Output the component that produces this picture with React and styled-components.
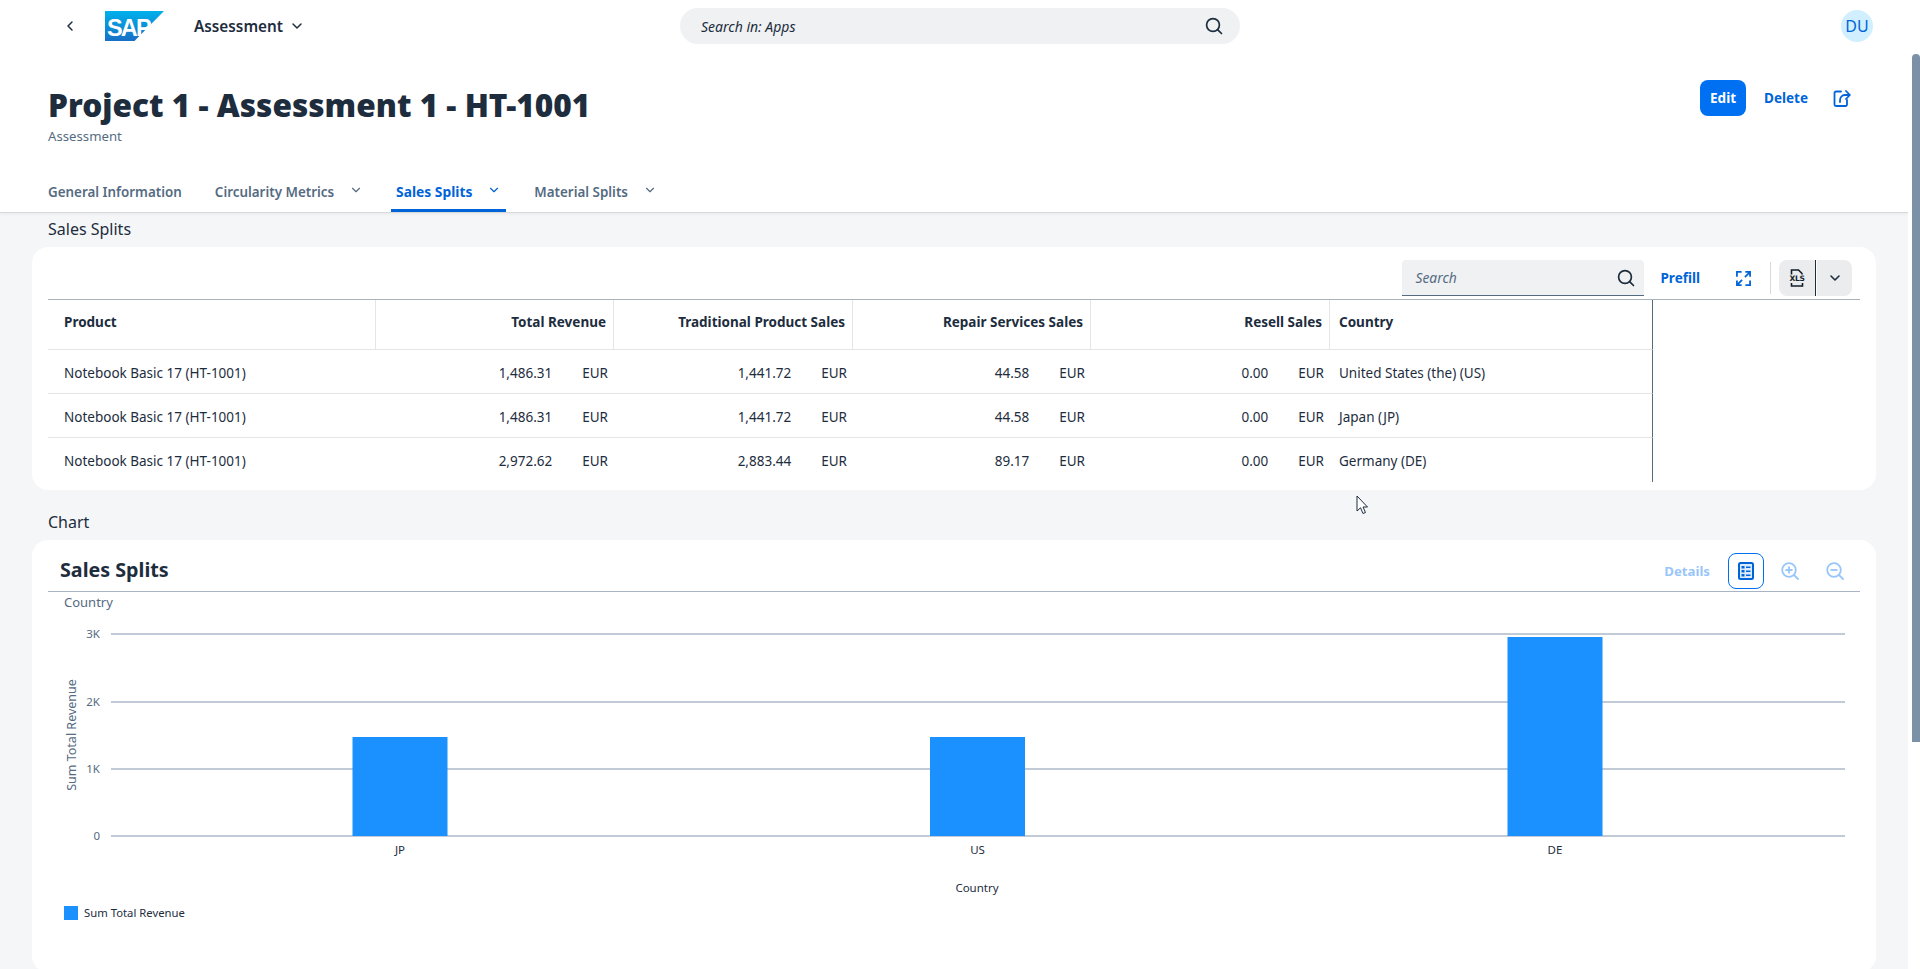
import styled, { createGlobalStyle } from 'styled-components';
import { ChevronDown, ChevronLeft } from 'lucide-react';

const GlobalStyle = createGlobalStyle`
    html, body {
        margin: 0;
        height: 100%;
        overflow: hidden;
    }
    body {
        font-family: "Noto Sans", "Liberation Sans", sans-serif;
        color: #1d2d3e;
    }
    * {
        box-sizing: border-box;
    }
`;

const Page = styled.div`
    position: relative;
    display: flex;
    flex-direction: column;
    height: 100vh;
    background: #fff;
    overflow: hidden;
`;

const Shell = styled.header`
    display: grid;
    grid-template-columns: 1fr 560px 1fr;
    align-items: center;
    flex: 0 0 54px;
    height: 54px;
    padding-bottom: 2px;
`;

const ShellLeft = styled.div`
    display: flex;
    align-items: center;
    padding-left: 62px;
`;

const BackButton = styled.span`
    display: flex;
    width: 16px;
    margin-right: 27px;
`;

const AppTitle = styled.span`
    display: flex;
    align-items: center;
    gap: 6px;
    margin-left: 30px;
    font-size: 15.3px;
    font-weight: 600;
`;

const ShellSearch = styled.div`
    display: flex;
    align-items: center;
    justify-content: space-between;
    height: 36px;
    padding: 0 17px 0 21px;
    border-radius: 18px;
    background: #eff1f2;
    font-size: 14px;
    font-style: italic;
`;

const ShellRight = styled.div`
    display: flex;
    justify-content: flex-end;
    padding-right: 47px;
`;

const Avatar = styled.span`
    display: flex;
    align-items: center;
    justify-content: center;
    width: 32px;
    height: 32px;
    border-radius: 50%;
    background: #d1efff;
    color: #0064d9;
    font-size: 16px;
`;

const Workspace = styled.div`
    display: flex;
    flex: 1;
    min-height: 0;
`;

const Main = styled.main`
    flex: 1;
    min-width: 0;
    overflow: hidden;
    background: #f5f6f7;
`;

const Rail = styled.div`
    flex: 0 0 12px;
    padding-left: 4px;
    background: #fff;
`;

const Thumb = styled.div`
    height: 688px;
    border-radius: 4px 4px 0 0;
    background: #7b91a8;
`;

const ObjectHeader = styled.section`
    display: flex;
    flex-direction: column;
    height: 159px;
    padding: 26px 0 0 48px;
    background: #fff;
    border-bottom: 1px solid #d9d9d9;
    box-shadow: 0 1px 3px rgba(0, 0, 0, 0.06);
`;

const TitleRow = styled.div`
    display: flex;
    justify-content: space-between;
    align-items: flex-start;
    padding-right: 57px;
`;

const Title = styled.h1`
    margin: 5px 0 0;
    font-size: 31.6px;
    line-height: 40px;
    font-weight: 900;
`;

const Subtitle = styled.div`
    margin-top: 2px;
    font-size: 13.2px;
    line-height: 18px;
    color: #556b82;
`;

const HeaderActions = styled.div`
    display: flex;
    align-items: center;
    gap: 18px;
`;

const EmphasizedButton = styled.span`
    display: flex;
    align-items: center;
    justify-content: center;
    width: 46px;
    height: 36px;
    border-radius: 8px;
    background: #0070f2;
    color: #fff;
    font-size: 13.5px;
    font-weight: 700;
`;

const TextButton = styled.span`
    color: ${p => (p.$disabled ? '#99c6fa' : '#0064d9')};
    font-size: ${p => (p.$disabled ? '13.2px' : '13.5px')};
    font-weight: 700;
`;

const PrefillButton = styled(TextButton)`
    margin: 0 36px 0 16px;
`;

const IconSlot = styled.span`
    display: flex;
    align-items: center;
    justify-content: center;
    margin-left: ${p => p.$offset || 0}px;
`;

const Tabs = styled.nav`
    display: flex;
    gap: 23px;
    height: 40px;
    margin-top: auto;
    margin-left: -5px;
`;

const Tab = styled.div`
    display: flex;
    align-items: center;
    gap: 15px;
    height: 40px;
    padding: 2px 5px 0;
    border-bottom: 3px solid ${p => (p.$active ? '#0064d9' : 'transparent')};
    color: ${p => (p.$active ? '#0064d9' : '#556b82')};
    font-size: ${p => (p.$active ? '13.8px' : '13.4px')};
    font-weight: ${p => (p.$active ? 700 : 600)};

    svg {
        margin-top: -4px;
    }
`;

const Content = styled.div`
    padding: 6px 32px 0;
`;

const SectionLabel = styled.div`
    margin: ${p => p.$top || 0}px 16px 8px;
    font-size: 16px;
    line-height: 20px;
`;

const Card = styled.section`
    height: ${p => p.$height}px;
    padding: 13px 16px 0;
    border-radius: 16px;
    background: #fff;
`;

const TableToolbar = styled.div`
    display: flex;
    justify-content: flex-end;
    align-items: center;
    height: 36px;
    padding-right: 8px;
`;

const ToolbarSearch = styled.div`
    display: flex;
    align-items: center;
    justify-content: space-between;
    width: 242px;
    height: 36px;
    padding: 0 9px 0 13px;
    border-bottom: 1px solid #556b82;
    border-radius: 4px 4px 0 0;
    background: #eff1f2;
    color: #556b82;
    font-size: 13.8px;
    font-style: italic;
`;

const Separator = styled.span`
    width: 1px;
    height: 32px;
    margin: 0 8px 0 19px;
    background: #d9d9d9;
`;

const MenuPart = styled.span`
    display: flex;
    align-items: center;
    justify-content: center;
    width: ${p => (p.$left ? '37px' : '35px')};
    height: 36px;
    background: #eaecee;
    border-radius: ${p => (p.$left ? '8px 0 0 8px' : '0 8px 8px 0')};
    border-right: ${p => (p.$left ? '1px solid #1d2d3e' : 'none')};
    margin-right: ${p => (p.$left ? '1px' : '0')};
`;

const TableFrame = styled.div`
    margin-top: 3px;
    border-top: 1px solid #a8b3bd;
`;

const Table = styled.table`
    width: 1605px;
    table-layout: fixed;
    border-collapse: separate;
    border-spacing: 0;
    font-size: 13.5px;
`;

const Head = styled.th`
    height: 50px;
    padding: 0 7px 5px ${p => p.$left || 9}px;
    border-bottom: 1px solid #e5e5e5;
    border-right: 1px solid ${p => (p.$end ? '#556b82' : '#e5e5e5')};
    font-weight: 700;
    text-align: ${p => (p.$numeric ? 'right' : 'left')};
`;

const Cell = styled.td`
    height: 44px;
    padding: 2px 6px 0 ${p => p.$left || 9}px;
    border-bottom: ${p => (p.$last ? 'none' : '1px solid #e5e5e5')};
    border-right: ${p => (p.$end ? '1px solid #556b82' : 'none')};
`;

const Amount = styled.div`
    display: flex;
    justify-content: flex-end;
    gap: 30px;
`;

const ChartToolbar = styled.div`
    display: flex;
    align-items: center;
    justify-content: space-between;
    height: 39px;
    padding: 0 7px 3px 12px;
    border-bottom: 1px solid #a8b3c6;
`;

const ChartTitle = styled.h2`
    margin: 0 0 2px;
    font-size: 19.7px;
    font-weight: 700;
`;

const ChartActions = styled.div`
    display: flex;
    align-items: center;
    gap: 9px;
`;

const ToggleButton = styled.span`
    display: flex;
    align-items: center;
    justify-content: center;
    width: 36px;
    height: 36px;
    margin: 0 -1px 0 9px;
    border: 1px solid #0070f2;
    border-radius: 8px;
`;

const SquareButton = styled.span`
    display: flex;
    align-items: center;
    justify-content: center;
    width: 36px;
    height: 36px;
`;

const Dimension = styled.div`
    padding-left: 16px;
    font-size: 13px;
    line-height: 20px;
    color: #556b82;
`;

const Plot = styled.svg`
    display: block;
    margin-top: 8px;
`;

const Legend = styled.div`
    display: flex;
    align-items: center;
    gap: 6px;
    margin-top: 5px;
    padding-left: 16px;
    font-size: 11.3px;
    color: #1d2d3e;
`;

const Swatch = styled.span`
    width: 14px;
    height: 14px;
    background: #1b90ff;
`;

const Pointer = styled.svg`
    position: absolute;
    left: 1356px;
    top: 495px;
`;

const rows = [
    { total: '1,486.31', trad: '1,441.72', repair: '44.58', country: 'United States (the) (US)' },
    { total: '1,486.31', trad: '1,441.72', repair: '44.58', country: 'Japan (JP)' },
    { total: '2,972.62', trad: '2,883.44', repair: '89.17', country: 'Germany (DE)' },
];

const ticks = [
    { label: '3K', y: 14 },
    { label: '2K', y: 82 },
    { label: '1K', y: 149 },
    { label: '0', y: 216 },
];

const bars = [
    { label: 'JP', x: 304.5, top: 117 },
    { label: 'US', x: 882, top: 117 },
    { label: 'DE', x: 1459.5, top: 17 },
];

const SearchIcon = ({ size = 18 }) => (
    <svg width={size} height={size} viewBox="0 0 18 18" fill="none" stroke="#1d2d3e" strokeWidth="1.7">
        <circle cx="8" cy="8" r="6.4" />
        <path d="M12.6 12.6 16.5 16.5" strokeLinecap="round" />
    </svg>
);

const ShareIcon = () => (
    <svg width="18" height="18" viewBox="0 0 18 18" fill="none" stroke="#0064d9" strokeWidth="1.8" strokeLinecap="round">
        <path d="M8 2.500H3A1.500 1.500 0 0 0 1.500 4v11.500A1.500 1.500 0 0 0 3 17h9.500a1.500 1.500 0 0 0 1.500-1.500V11" />
        <path d="M7 13v-1.500C7 8.500 9 6 12 6h4.500M13 2l3.800 4L13 10" />
    </svg>
);

const ExpandIcon = () => (
    <svg width="15" height="15" viewBox="0 0 16 16" fill="none" stroke="#0064d9" strokeWidth="1.9">
        <path d="M1 6V1h5M15 10v5h-5" />
        <path d="M10 1h5v5M15 1 9.500 6.500M1 10v5h5M1 15l5.500-5.500" />
    </svg>
);

const XlsIcon = () => (
    <svg width="20" height="20" viewBox="0 0 20 20" fill="none">
        <path d="M4.500 6.500V2h7l3.500 3.500v1M4.500 15V18h11v-3" stroke="#131e29" strokeWidth="1.6" />
        <text x="10" y="13" textAnchor="middle" fontFamily="DejaVu Sans" fontSize="7.500" fontWeight="700" letterSpacing="-0.300" fill="#131e29">XLS</text>
    </svg>
);

const TableIcon = () => (
    <svg width="16" height="18" viewBox="0 0 16 18">
        <rect x="1" y="1" width="14" height="16" rx="1.500" fill="#dbeafe" stroke="#0064d9" strokeWidth="2" />
        <path d="M3.500 4h3v2.500h-3zM3.500 8h3v2.500h-3zM3.500 12h3v2.500h-3z" fill="#0064d9" />
        <path d="M8 5.200h4.500M8 9.200h4.500M8 13.200h4.500" stroke="#0064d9" strokeWidth="1.600" />
    </svg>
);

const ZoomIcon = ({ plus }) => (
    <svg width="18" height="18" viewBox="0 0 18 18" fill="none" stroke="#99c6fa" strokeWidth="1.8">
        <circle cx="8" cy="8" r="6.800" />
        <path d="M13 13 17 17" strokeLinecap="round" />
        <path d={plus ? 'M4.500 8h7M8 4.500v7' : 'M4.500 8h7'} />
    </svg>
);

const SapLogo = () => (
    <svg width="59" height="30" viewBox="0 0 59 30">
        <defs>
            <linearGradient id="sapBlue" x1="0" y1="0" x2="0" y2="1">
                <stop offset="0" stopColor="#00b1eb" />
                <stop offset="1" stopColor="#1870c5" />
            </linearGradient>
        </defs>
        <path d="M0 0H59L29.500 30H0Z" fill="url(#sapBlue)" />
        <text x="2" y="24.500" fontFamily="Liberation Sans" fontSize="23.500" fontWeight="700" fill="#fff" letterSpacing="-1.800">SAP</text>
    </svg>
);

const App = () => {
    return (
        <Page>
            <GlobalStyle />
            <Shell>
                <ShellLeft>
                    <BackButton>
                        <ChevronLeft size={16} strokeWidth={2.2} />
                    </BackButton>
                    <SapLogo />
                    <AppTitle>
                        Assessment
                        <ChevronDown size={16} strokeWidth={2.2} />
                    </AppTitle>
                </ShellLeft>
                <ShellSearch>
                    Search in: Apps
                    <SearchIcon />
                </ShellSearch>
                <ShellRight>
                    <Avatar>DU</Avatar>
                </ShellRight>
            </Shell>
            <Workspace>
                <Main>
                    <ObjectHeader>
                        <TitleRow>
                            <div>
                                <Title>Project 1 - Assessment 1 - HT-1001</Title>
                                <Subtitle>Assessment</Subtitle>
                            </div>
                            <HeaderActions>
                                <EmphasizedButton>Edit</EmphasizedButton>
                                <TextButton>Delete</TextButton>
                                <IconSlot $offset={7}>
                                    <ShareIcon />
                                </IconSlot>
                            </HeaderActions>
                        </TitleRow>
                        <Tabs>
                            <Tab>General Information</Tab>
                            <Tab>
                                Circularity Metrics
                                <ChevronDown size={14} strokeWidth={2} />
                            </Tab>
                            <Tab $active>
                                Sales Splits
                                <ChevronDown size={14} strokeWidth={2} />
                            </Tab>
                            <Tab>
                                Material Splits
                                <ChevronDown size={14} strokeWidth={2} />
                            </Tab>
                        </Tabs>
                    </ObjectHeader>
                    <Content>
                        <SectionLabel>Sales Splits</SectionLabel>
                        <Card $height={243}>
                            <TableToolbar>
                                <ToolbarSearch>
                                    Search
                                    <SearchIcon />
                                </ToolbarSearch>
                                <PrefillButton>Prefill</PrefillButton>
                                <IconSlot>
                                    <ExpandIcon />
                                </IconSlot>
                                <Separator />
                                <MenuPart $left>
                                    <XlsIcon />
                                </MenuPart>
                                <MenuPart>
                                    <ChevronDown size={16} strokeWidth={2.4} />
                                </MenuPart>
                            </TableToolbar>
                            <TableFrame>
                                <Table>
                                    <colgroup>
                                        <col width="328" />
                                        <col width="238" />
                                        <col width="239" />
                                        <col width="238" />
                                        <col width="239" />
                                        <col width="323" />
                                    </colgroup>
                                    <thead>
                                        <tr>
                                            <Head $left={16}>Product</Head>
                                            <Head $numeric>Total Revenue</Head>
                                            <Head $numeric>Traditional Product Sales</Head>
                                            <Head $numeric>Repair Services Sales</Head>
                                            <Head $numeric>Resell Sales</Head>
                                            <Head $end>Country</Head>
                                        </tr>
                                    </thead>
                                    <tbody>
                                        {rows.map((row, i) => {
                                            const last = i === rows.length - 1;
                                            return (
                                                <tr key={row.country}>
                                                    <Cell $left={16} $last={last}>Notebook Basic 17 (HT-1001)</Cell>
                                                    {[row.total, row.trad, row.repair, '0.00'].map((value, j) => (
                                                        <Cell key={j} $last={last}>
                                                            <Amount>
                                                                <span>{value}</span>
                                                                <span>EUR</span>
                                                            </Amount>
                                                        </Cell>
                                                    ))}
                                                    <Cell $end $last={last}>{row.country}</Cell>
                                                </tr>
                                            );
                                        })}
                                    </tbody>
                                </Table>
                            </TableFrame>
                        </Card>
                        <SectionLabel $top={22}>Chart</SectionLabel>
                        <Card $height={432}>
                            <ChartToolbar>
                                <ChartTitle>Sales Splits</ChartTitle>
                                <ChartActions>
                                    <TextButton $disabled>Details</TextButton>
                                    <ToggleButton>
                                        <TableIcon />
                                    </ToggleButton>
                                    <SquareButton>
                                        <ZoomIcon plus />
                                    </SquareButton>
                                    <SquareButton>
                                        <ZoomIcon />
                                    </SquareButton>
                                </ChartActions>
                            </ChartToolbar>
                            <Dimension>Country</Dimension>
                            <Plot width="1812" height="280" viewBox="0 0 1812 280" fontFamily="Noto Sans" fontSize="11.5">
                                {ticks.map(tick => (
                                    <g key={tick.label}>
                                        <line x1="63" x2="1797" y1={tick.y} y2={tick.y} stroke="#8396ad" />
                                        <text x="52" y={tick.y + 4} textAnchor="end" fill="#556b82">{tick.label}</text>
                                    </g>
                                ))}
                                {bars.map(bar => (
                                    <g key={bar.label}>
                                        <rect x={bar.x} y={bar.top} width="95" height={216 - bar.top} fill="#1b90ff" />
                                        <text x={bar.x + 47.500} y="234" textAnchor="middle" fill="#1d2d3e">{bar.label}</text>
                                    </g>
                                ))}
                                <text x="929" y="272" textAnchor="middle" fill="#1d2d3e">Country</text>
                                <text transform="translate(28 115) rotate(-90)" textAnchor="middle" fontSize="12.5" fill="#556b82">Sum Total Revenue</text>
                            </Plot>
                            <Legend>
                                <Swatch />
                                Sum Total Revenue
                            </Legend>
                        </Card>
                    </Content>
                </Main>
                <Rail>
                    <Thumb />
                </Rail>
            </Workspace>
            <Pointer width="13" height="21" viewBox="0 0 13 21">
                <path d="M1 1V16L4.500 12.800 7 18.500 9.500 17.500 7 12H11.500Z" fill="#fff" stroke="#1d2d3e" strokeWidth="1" />
            </Pointer>
        </Page>
    );
};

export default App;
